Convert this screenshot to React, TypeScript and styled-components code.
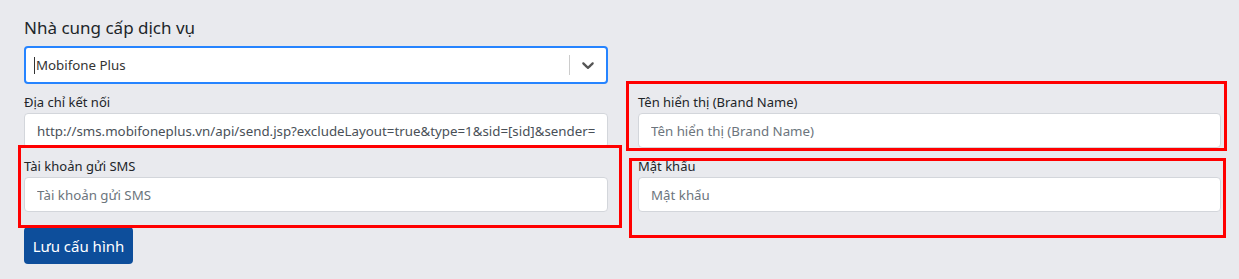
import React from "react";
import styled, { createGlobalStyle } from "styled-components";

const GlobalStyle = createGlobalStyle`
  html, body { margin: 0; padding: 0; background: #e9eaee; }
  body { font-family: "Noto Sans", "Segoe UI", sans-serif; color: #212529; }
  * { box-sizing: border-box; }
`;

const Page = styled.div`
  position: relative;
  width: 1239px;
  height: 279px;
  padding: 17px 18px 0 24px;
`;

const Grid = styled.div`
  display: grid;
  grid-template-columns: 584px 583px;
  column-gap: 30px;
`;

const Title = styled.h2`
  margin: 0 0 8px;
  font-size: 17px;
  font-weight: 400;
  line-height: 21px;
  color: #212529;
`;

const Field = styled.div`
  display: flex;
  flex-direction: column;
  padding-top: 8px;
`;

const Label = styled.label`
  font-size: 13px;
  line-height: 21px;
  color: #212529;
`;

const Input = styled.input`
  height: 35px;
  width: 100%;
  border: 1px solid #d3d6db;
  border-radius: 4px;
  background: #fff;
  padding: 0 12px;
  font-family: inherit;
  font-size: 13.3px;
  color: #495057;
  outline: none;
  &::placeholder { color: #6c757d; }
`;

const Select = styled.div`
  height: 38px;
  border: 2px solid #2684ff;
  border-radius: 4px;
  background: #fff;
  display: flex;
  align-items: center;
`;

const SelectValue = styled.div`
  flex: 1;
  padding-left: 8px;
  font-size: 13.3px;
  color: #333;
  display: flex;
  align-items: center;
`;

const Caret = styled.span`
  display: inline-block;
  width: 1px;
  height: 17px;
  background: #333;
  margin-right: 1px;
`;

const Separator = styled.span`
  width: 1px;
  height: 20px;
  background: #ccc;
`;

const Chevron = styled.div`
  width: 36px;
  display: flex;
  justify-content: center;
  align-items: center;
  color: #555;
`;

const Button = styled.button`
  margin-top: 15px;
  width: 109px;
  height: 37px;
  border: none;
  border-radius: 4px;
  background: #0d4e9b;
  color: #fff;
  font-family: inherit;
  font-size: 15px;
  cursor: pointer;
`;

const RedBox = styled.div<{ $l: number; $t: number; $w: number; $h: number }>`
  position: absolute;
  left: ${(p) => p.$l}px;
  top: ${(p) => p.$t}px;
  width: ${(p) => p.$w}px;
  height: ${(p) => p.$h}px;
  border: 3px solid #ff0000;
  pointer-events: none;
`;

export default function App() {
  return (
    <>
      <GlobalStyle />
      <Page>
        <Grid>
          <div>
            <Title>Nhà cung cấp dịch vụ</Title>
            <Select>
              <SelectValue>
                <Caret />
                Mobifone Plus
              </SelectValue>
              <Separator />
              <Chevron>
                <svg width="20" height="20" viewBox="0 0 20 20" fill="currentColor">
                  <path d="M4.516 7.548c0.436-0.446 1.043-0.481 1.576 0l3.908 3.747 3.908-3.747c0.533-0.481 1.141-0.446 1.574 0 0.436 0.445 0.408 1.197 0 1.615-0.406 0.418-4.695 4.502-4.695 4.502-0.217 0.223-0.502 0.335-0.787 0.335s-0.57-0.112-0.789-0.335c0 0-4.287-4.084-4.695-4.502s-0.436-1.170 0-1.615z" />
                </svg>
              </Chevron>
            </Select>
          </div>
          <div />
          <Field>
            <Label>Địa chỉ kết nối</Label>
            <Input
              readOnly
              value="http://sms.mobifoneplus.vn/api/send.jsp?excludeLayout=true&type=1&sid=[sid]&sender="
            />
          </Field>
          <Field>
            <Label>Tên hiển thị (Brand Name)</Label>
            <Input placeholder="Tên hiển thị (Brand Name)" />
          </Field>
          <Field>
            <Label>Tài khoản gửi SMS</Label>
            <Input placeholder="Tài khoản gửi SMS" />
          </Field>
          <Field>
            <Label>Mật khẩu</Label>
            <Input placeholder="Mật khẩu" />
          </Field>
          <div>
            <Button>Lưu cấu hình</Button>
          </div>
        </Grid>
        <RedBox $l={18} $t={145} $w={604} $h={83} />
        <RedBox $l={626} $t={81} $w={601} $h={70} />
        <RedBox $l={629} $t={158} $w={597} $h={80} />
      </Page>
    </>
  );
}
